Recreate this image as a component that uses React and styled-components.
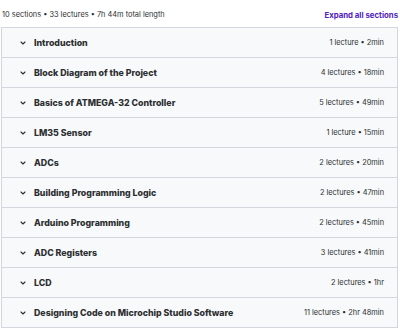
import React from 'react';
import styled, { createGlobalStyle } from 'styled-components';

const Global = createGlobalStyle`
  html, body { margin: 0; padding: 0; background: #fff; }
  body { font-family: Inter, "Noto Sans", sans-serif; color: #2d2f31; }
`;

const Wrap = styled.div`
  width: 400px;
  padding: 0 2px 0 1px;
  box-sizing: border-box;
`;

const Head = styled.div`
  display: flex;
  justify-content: space-between;
  align-items: center;
  height: 27px;
  padding: 2px 0 0 1px;
  box-sizing: border-box;
`;

const Summary = styled.span`
  font-size: 7.4px;
  color: #2d2f31;
`;

const Expand = styled.span`
  font-size: 7.8px;
  font-weight: 700;
  color: #5022c3;
`;

const List = styled.div`
  border: 1px solid #d1d7dc;
`;

const Row = styled.div`
  display: flex;
  align-items: center;
  height: 29px;
  padding: 0 13px 0 18px;
  background: #f7f9fa;
  border-top: ${p => (p.first ? 'none' : '1px solid #d1d7dc')};
`;

const Chevron = styled.svg`
  width: 6px;
  height: 6px;
  margin-right: 8px;
  flex: none;
`;

const Title = styled.span`
  flex: 1;
  font-size: 8.8px;
  font-weight: 800;
  color: #2d2f31;
`;

const Meta = styled.span`
  font-size: 7.4px;
  color: #2d2f31;
`;

const sections = [
  ['Introduction', '1 lecture • 2min'],
  ['Block Diagram of the Project', '4 lectures • 18min'],
  ['Basics of ATMEGA-32 Controller', '5 lectures • 49min'],
  ['LM35 Sensor', '1 lecture • 15min'],
  ['ADCs', '2 lectures • 20min'],
  ['Building Programming Logic', '2 lectures • 47min'],
  ['Arduino Programming', '2 lectures • 45min'],
  ['ADC Registers', '3 lectures • 41min'],
  ['LCD', '2 lectures • 1hr'],
  ['Designing Code on Microchip Studio Software', '11 lectures • 2hr 48min'],
];

export default function App() {
  return (
    <Wrap>
      <Global />
      <Head>
        <Summary>10 sections • 33 lectures • 7h 44m total length</Summary>
        <Expand>Expand all sections</Expand>
      </Head>
      <List>
        {sections.map(([t, m], i) => (
          <Row key={t} first={i === 0}>
            <Chevron viewBox="0 0 6 6">
              <path d="M1 2 L3 4 L5 2" fill="none" stroke="#2d2f31" strokeWidth="1.1" strokeLinecap="round" strokeLinejoin="round" />
            </Chevron>
            <Title>{t}</Title>
            <Meta>{m}</Meta>
          </Row>
        ))}
      </List>
    </Wrap>
  );
}
